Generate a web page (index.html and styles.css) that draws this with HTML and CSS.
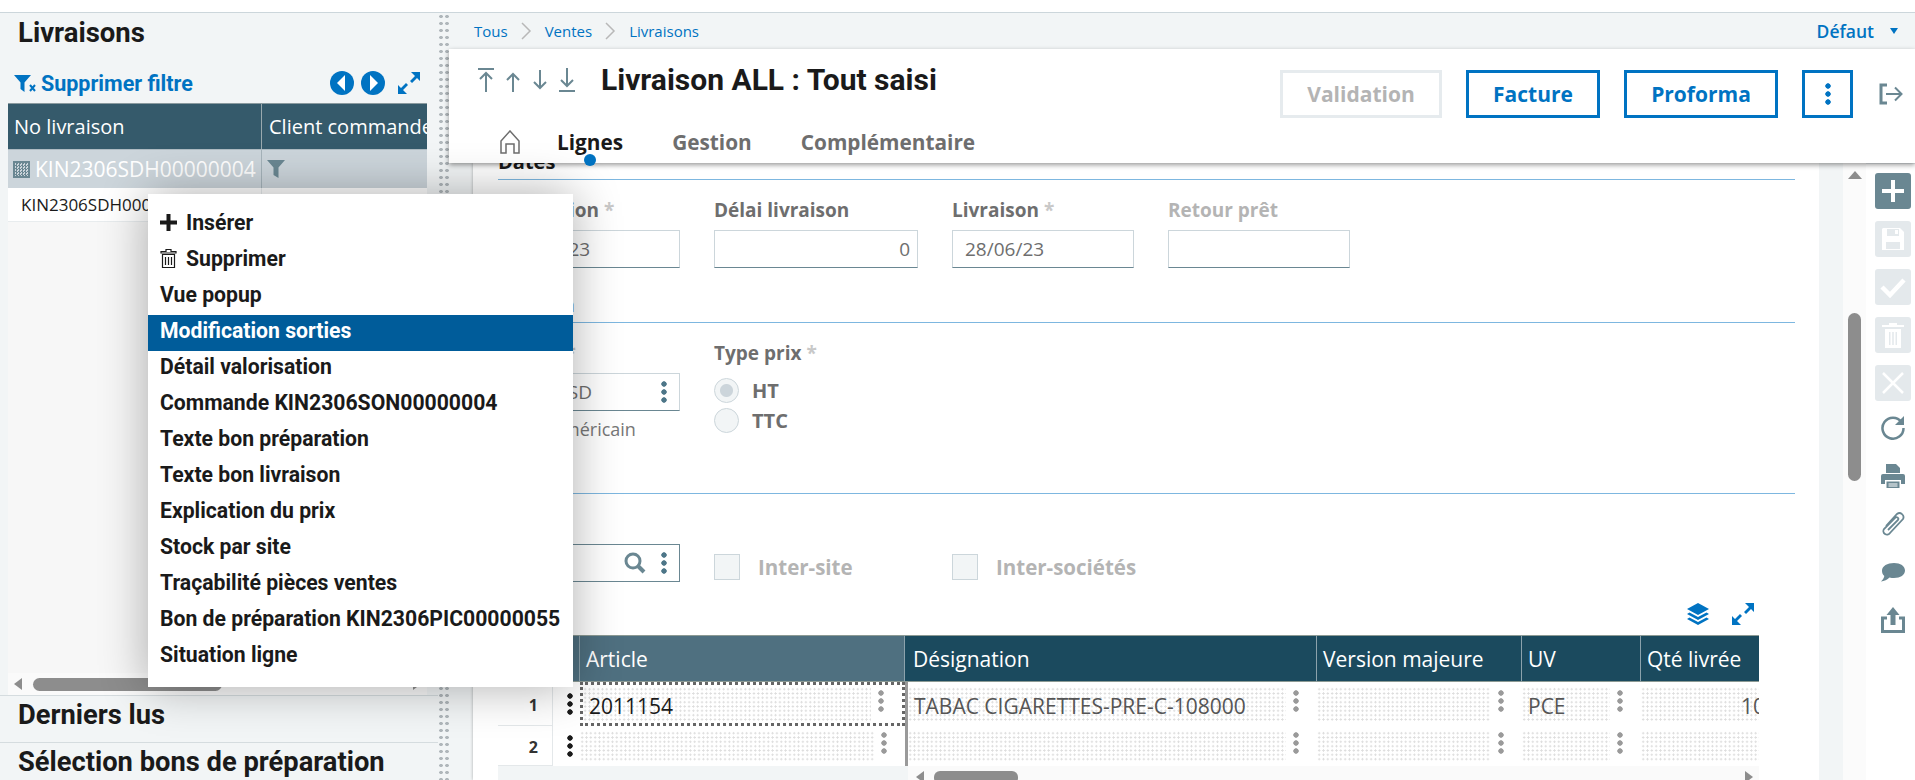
FILE: index.html
```html
<!DOCTYPE html>
<html lang="fr">
<head>
<meta charset="UTF-8">
<meta name="viewport" content="width=device-width, initial-scale=1.0">
<link rel="stylesheet" href="styles.css">
<title>Livraisons</title>
</head>

<body>
  <div class="top-strip"></div>

  <div class="app">
    <!-- left list panel -->
    <aside class="left-panel">
      <h2 class="panel-title">Livraisons</h2>
      <div class="panel-tools">
        <svg class="filter-x" width="23" height="18" viewBox="0 0 23 18"><path d="M0 1h17l-6.500 7.500V18L6.500 15V8.500z" fill="#0073c2"/><path d="M16 11l5 6M21 11l-5 6" stroke="#0073c2" stroke-width="2"/></svg>
        <span class="remove-filter">Supprimer filtre</span>
        <span class="panel-tools-right">
          <svg width="24" height="24" viewBox="0 0 24 24"><circle cx="12" cy="12" r="12" fill="#0073c2"/><path d="M15 4v16L7 12z" fill="#fff"/></svg>
          <svg class="next-btn" width="24" height="24" viewBox="0 0 24 24"><circle cx="12" cy="12" r="12" fill="#0073c2"/><path d="M9 4v16l8-8z" fill="#fff"/></svg>
          <svg class="expand-btn" width="22" height="22" viewBox="0 0 22 22"><path d="M13 0h9v9l-3-3-5 5-2-2 5-5zM9 22H0v-9l3 3 5-5 2 2-5 5z" fill="#0073c2"/></svg>
        </span>
      </div>

      <div class="list-table">
        <div class="list-head">
          <div class="list-col-a">No livraison</div>
          <div class="list-col-b">Client commande</div>
        </div>
        <div class="list-filter">
          <div class="list-col-a">
            <span class="filter-chip"></span>
            <span>KIN2306SDH00000004</span>
          </div>
          <div class="list-col-b">
            <svg width="18" height="20" viewBox="0 0 18 20"><path d="M0 1h18l-6.500 7.500V19L6.500 16V8.500z" fill="#6a8792"/></svg>
          </div>
        </div>
        <div class="list-row">
          <div class="list-col-a">KIN2306SDH00000004</div>
          <div class="list-col-b"></div>
        </div>
      </div>

      <div class="list-space"></div>

      <div class="list-scroll">
        <span class="arrow-left"></span>
        <span class="list-thumb"></span>
        <span class="arrow-right"></span>
      </div>

      <h2 class="accordion-item">Derniers lus</h2>
      <h2 class="accordion-item">Sélection bons de préparation</h2>
    </aside>

    <div class="splitter"></div>

    <!-- right side -->
    <div class="work">
      <div class="crumbs">
        <a>Tous</a>
        <svg width="11" height="18" viewBox="0 0 11 18"><path d="M1 1l8 8-8 8" fill="none" stroke="#b8b8b8" stroke-width="1.500"/></svg>
        <a>Ventes</a>
        <svg width="11" height="18" viewBox="0 0 11 18"><path d="M1 1l8 8-8 8" fill="none" stroke="#b8b8b8" stroke-width="1.500"/></svg>
        <a>Livraisons</a>
        <span class="crumbs-right">Défaut<span class="caret"></span></span>
      </div>

      <header class="doc-head">
        <div class="doc-head-top">
          <div class="nav-arrows">
            <svg width="16" height="24" viewBox="0 0 16 24"><path d="M0 1h16M8 24V5M2 11l6-6 6 6" fill="none" stroke="#6a8792" stroke-width="2"/></svg>
            <svg width="16" height="24" viewBox="0 0 16 24"><path d="M8 24V6M2 12l6-6 6 6" fill="none" stroke="#6a8792" stroke-width="2"/></svg>
            <svg width="16" height="24" viewBox="0 0 16 24"><path d="M8 2v18M2 14l6 6 6-6" fill="none" stroke="#6a8792" stroke-width="2"/></svg>
            <svg width="16" height="24" viewBox="0 0 16 24"><path d="M8 0v18M2 12l6 6 6-6M0 23h16" fill="none" stroke="#6a8792" stroke-width="2"/></svg>
          </div>
          <h1 class="doc-title">Livraison ALL : Tout saisi</h1>
          <div class="doc-actions">
            <button class="btn btn-off btn-validation">Validation</button>
            <button class="btn btn-facture">Facture</button>
            <button class="btn btn-proforma">Proforma</button>
            <button class="btn btn-more"><span class="kebab"></span></button>
            <svg class="logout" width="24" height="22" viewBox="0 0 24 22"><path d="M8 2H2v18h6" fill="none" stroke="#6a8792" stroke-width="3"/><path d="M7 11h15M16 4.500l6.500 6.500-6.500 6.500" fill="none" stroke="#6a8792" stroke-width="2"/></svg>
          </div>
        </div>
        <nav class="tabs">
          <svg class="tab-home" width="20" height="24" viewBox="0 0 20 24"><path d="M1 11L10 1l9 10v12h-5v-9H6v9H1z" fill="none" stroke="#6e6e6e" stroke-width="1.500"/></svg>
          <span class="tab tab-on">Lignes<i class="tab-dot"></i></span>
          <span class="tab">Gestion</span>
          <span class="tab">Complémentaire</span>
        </nav>
      </header>

      <div class="body-row">
        <div class="left-gutter"></div>
        <main class="form">
          <section class="sec-dates">
            <h3 class="sec-title">Dates</h3>
            <div class="fields">
              <div class="field w182">
                <label>Expédition <em>*</em></label>
                <div class="input">28/06/23</div>
              </div>
              <div class="field w204">
                <label>Délai livraison</label>
                <div class="input input-num">0</div>
              </div>
              <div class="field w182">
                <label>Livraison <em>*</em></label>
                <div class="input">28/06/23</div>
              </div>
              <div class="field w182">
                <label class="label-off">Retour prêt</label>
                <div class="input"></div>
              </div>
            </div>
          </section>

          <section class="sec-price">
            <h3 class="sec-title">Gestion</h3>
            <div class="fields">
              <div class="field w182">
                <label>Devise <em>*</em></label>
                <div class="input input-tools input-code">USD<span class="kebab"></span></div>
                <div class="input-sub">Dollar américain</div>
              </div>
              <div class="field w204">
                <label>Type prix <em>*</em></label>
                <div class="radio-line radio-first"><span class="radio radio-on"></span>HT</div>
                <div class="radio-line"><span class="radio"></span>TTC</div>
              </div>
            </div>
          </section>

          <section class="sec-site">
            <h3 class="sec-title"></h3>
            <div class="site-row">
              <div class="input input-tools input-dark w182">
                <svg class="search-ico" width="22" height="22" viewBox="0 0 22 22"><circle cx="9" cy="9" r="7" fill="none" stroke="#6a8792" stroke-width="3"/><path d="M14 14l6 6" stroke="#6a8792" stroke-width="4"/></svg>
                <span class="kebab"></span>
              </div>
              <div class="check check-a"><span class="check-box"></span>Inter-site</div>
              <div class="check"><span class="check-box"></span>Inter-sociétés</div>
            </div>
          </section>

          <div class="grid-tools">
            <svg width="24" height="22" viewBox="0 0 24 22"><path d="M12 0l11 6-11 6L1 6z" fill="#0073c2"/><path d="M3.500 9.500L1 11l11 6 11-6-2.500-1.500L12 14z" fill="#0073c2"/><path d="M3.500 14.500L1 16l11 6 11-6-2.500-1.500L12 19z" fill="#0073c2"/></svg>
            <svg width="22" height="22" viewBox="0 0 22 22"><path d="M13 0h9v9l-3-3-5 5-2-2 5-5zM9 22H0v-9l3 3 5-5 2 2-5 5z" fill="#0073c2"/></svg>
          </div>

          <div class="grid">
            <div class="gh gh-num"></div>
            <div class="gh gh-sel">Article</div>
            <div class="gh gh-sep">Désignation</div>
            <div class="gh">Version majeure</div>
            <div class="gh">UV</div>
            <div class="gh">Qté livrée</div>

            <div class="gnum"><b>1</b><span class="kebab"></span></div>
            <div class="gc gc-focus"><span class="gc-text">2011154</span><span class="kebab"></span></div>
            <div class="gc gc-sep"><span class="gc-text">TABAC CIGARETTES-PRE-C-108000</span><span class="kebab"></span></div>
            <div class="gc"><span class="gc-text"></span><span class="kebab"></span></div>
            <div class="gc"><span class="gc-text">PCE</span><span class="kebab"></span></div>
            <div class="gc gc-qty"><span class="gc-text">100</span></div>

            <div class="gnum"><b>2</b><span class="kebab"></span></div>
            <div class="gc"><span class="gc-text"></span><span class="kebab"></span></div>
            <div class="gc gc-sep"><span class="gc-text"></span><span class="kebab"></span></div>
            <div class="gc"><span class="gc-text"></span><span class="kebab"></span></div>
            <div class="gc"><span class="gc-text"></span><span class="kebab"></span></div>
            <div class="gc gc-qty"><span class="gc-text"></span></div>
          </div>

          <div class="grid-scroll">
            <div class="grid-scroll-fixed"></div>
            <div class="grid-scroll-track">
              <span class="arrow-left"></span>
              <span class="grid-thumb"></span>
              <span class="arrow-right"></span>
            </div>
          </div>
        </main>

        <div class="v-gutter"></div>
        <div class="v-scroll">
          <span class="arrow-up"></span>
          <span class="v-thumb"></span>
        </div>

        <div class="side-tools">
          <span class="st st-on"><svg width="24" height="24" viewBox="0 0 24 24"><path d="M10 1h4v9h9v4h-9v9h-4v-9H1v-4h9z" fill="#fff"/></svg></span>
          <span class="st"><svg width="24" height="24" viewBox="0 0 24 24"><path d="M2 1h17l4 4v18H1V2zM6 2v7h12V2zM14 3h3v4h-3zM5 15v7h14v-7z" fill="#fff" fill-rule="evenodd"/></svg></span>
          <span class="st"><svg width="26" height="22" viewBox="0 0 26 22"><path d="M2 11l8 8L24 4" fill="none" stroke="#fff" stroke-width="4.500"/></svg></span>
          <span class="st"><svg width="22" height="26" viewBox="0 0 22 26"><path d="M7 1h8v2h7v2H0V3h7zM3 7h16v19H3zM7 10v13h1.500V10zM10.200 10v13h1.600V10zM13.500 10v13H15V10z" fill="#fff" fill-rule="evenodd"/></svg></span>
          <span class="st"><svg width="22" height="22" viewBox="0 0 22 22"><path d="M1 1l20 20M21 1L1 21" stroke="#fff" stroke-width="2.500"/></svg></span>
          <span class="st-plain st-first"><svg width="26" height="26" viewBox="0 0 26 26"><path d="M21.500 7A10.500 10.500 0 1 0 23.500 13" fill="none" stroke="#6a8792" stroke-width="2.500"/><path d="M24 1v9h-9z" fill="#6a8792"/></svg></span>
          <span class="st-plain"><svg width="26" height="26" viewBox="0 0 26 26"><path d="M6 1h10l4 4v5H6zM3 11h20a2 2 0 0 1 2 2v8h-4v-4H5v4H1v-8a2 2 0 0 1 2-2zM6.500 18.500h13V25h-13z" fill="#6a8792"/><path d="M8.500 21h9M8.500 23h9" stroke="#fff"/></svg></span>
          <span class="st-plain"><svg width="26" height="26" viewBox="0 0 26 26"><path d="M6 15L17 3a4 4 0 0 1 6 5L10 22a3 3 0 0 1-6-4L15 7a1.800 1.800 0 0 1 3 2L8 19" fill="none" stroke="#6a8792" stroke-width="1.800"/></svg></span>
          <span class="st-plain"><svg width="26" height="22" viewBox="0 0 26 22"><path d="M14 2c6.500 0 11 3 11 7.500S20.500 17 14 17c-1.500 0-3-.2-4.500-.6C7.500 18.500 4 20 1 20.500c1.600-1.500 3-3.300 3.300-5.500C2.500 13.500 2 11.500 2 9.500 2 5 7.500 2 14 2z" fill="#6a8792"/></svg></span>
          <span class="st-plain"><svg width="24" height="26" viewBox="0 0 24 26"><path d="M12 0l6.500 8H14.500v10h-5V8H5.500z" fill="#6a8792"/><path d="M6 11H1.500v13.500h21V11H18" fill="none" stroke="#6a8792" stroke-width="3"/></svg></span>
        </div>
      </div>
    </div>
  </div>

  <!-- context menu -->
  <ul class="menu">
    <li><svg width="17" height="17" viewBox="0 0 17 17"><path d="M6.500 0h4v6.500H17v4h-6.500V17h-4v-6.500H0v-4h6.500z" fill="#1a1a1a"/></svg>Insérer</li>
    <li><svg width="17" height="19" viewBox="0 0 16 19"><path d="M5.500.5h5v2h5v1.500H.5V2.500h5zM2 5.500h12V18.500H2zM5 8v8M8 8v8M11 8v8" fill="none" stroke="#1a1a1a" stroke-width="1.200"/></svg>Supprimer</li>
    <li>Vue popup</li>
    <li class="menu-on">Modification sorties</li>
    <li>Détail valorisation</li>
    <li>Commande KIN2306SON00000004</li>
    <li>Texte bon préparation</li>
    <li>Texte bon livraison</li>
    <li>Explication du prix</li>
    <li>Stock par site</li>
    <li>Traçabilité pièces ventes</li>
    <li>Bon de préparation KIN2306PIC00000055</li>
    <li>Situation ligne</li>
  </ul>
</body>
</html>
```

FILE: styles.css
```css
* {
  box-sizing: border-box;
}
html, body {
  margin: 0;
  height: 100%;
  overflow: hidden;
}
body {
  width: 1915px;
  height: 780px;
  position: relative;
  background-color: #fff;
  color: #1a1a1a;
  font-family: "Open Sans", "Liberation Sans", sans-serif;
  display: flex;
  flex-direction: column;
}
h1, h2, h3 {
  margin: 0;
}
svg {
  display: block;
  flex: none;
}

.top-strip {
  height: 13px;
  flex: none;
  border-bottom: 1px solid #ccd6db;
}
.app {
  flex: 1;
  display: flex;
  min-height: 0;
}

/* left panel */
.left-panel {
  width: 438px;
  flex: none;
  display: flex;
  flex-direction: column;
  background-color: #f2f5f6;
  overflow: hidden;
}
.panel-title {
  height: 38px;
  flex: none;
  padding: 1px 0 0 18px;
  font: 700 27.500px/38px Roboto, sans-serif;
}
.panel-tools {
  height: 52px;
  flex: none;
  display: flex;
  align-items: center;
  padding: 12px 18px 0 14px;
  color: #0073c2;
}
.remove-filter {
  margin-left: 4px;
  font: 700 21.500px Roboto, sans-serif;
}
.panel-tools-right {
  margin-left: auto;
  display: flex;
  align-items: center;
}
.next-btn {
  margin-left: 7px;
}
.expand-btn {
  margin-left: 13px;
}
.list-table {
  margin: 0 11px 0 8px;
  flex: none;
}
.list-head, .list-filter, .list-row {
  display: flex;
  overflow: hidden;
  white-space: nowrap;
}
.list-col-a {
  width: 254px;
  flex: none;
  display: flex;
  align-items: center;
}
.list-col-b {
  flex: 1;
  display: flex;
  align-items: center;
}
.list-head {
  height: 46px;
  background-color: #355a6b;
  color: #fff;
  font-size: 20px;
  border-top: 1px solid #8a9a9f;
}
.list-head .list-col-a {
  padding-left: 6px;
  border-right: 1px solid #9aa9ae;
}
.list-head .list-col-b {
  padding-left: 7px;
}
.list-filter {
  height: 39px;
  background-color: #ccd5db;
  color: #fff;
  font-size: 21px;
  border-top: 1px solid #aebbc2;
}
.list-filter .list-col-a {
  padding-left: 5px;
  gap: 5px;
  border-right: 1px solid #a5b3ba;
}
.list-filter .list-col-b {
  padding-left: 5px;
}
.filter-chip {
  width: 17px;
  height: 17px;
  border: 2px solid #6a8792;
  background: repeating-conic-gradient(#6a8792 0 25%, #ccd5db 0 50%) 0 0 / 3px 3px;
}
.list-row {
  height: 34px;
  background-color: #fff;
  font-size: 17px;
  border-bottom: 1px solid #e8ecee;
}
.list-row .list-col-a {
  padding-left: 13px;
  border-right: 1px solid #e8ecee;
}
.list-space {
  flex: 1;
  margin: 0 11px 0 8px;
  background-color: #f7f7f7;
}
.list-scroll {
  height: 22px;
  flex: none;
  margin: 0 11px 0 8px;
  background-color: #fafafa;
  display: flex;
  align-items: center;
  padding: 0 6px;
}
.list-thumb {
  width: 189px;
  height: 13px;
  margin-left: 11px;
  border-radius: 7px;
  background-color: #8d8d8d;
}
.list-scroll .arrow-right {
  margin-left: auto;
}
.accordion-item {
  height: 47px;
  flex: none;
  padding: 1px 0 0 18px;
  border-top: 1px solid #d5dcdf;
  font: 700 27.300px/36px Roboto, sans-serif;
}
.accordion-item + .accordion-item {
  height: 38px;
}

.arrow-left, .arrow-right {
  width: 0;
  height: 0;
  border-top: 6px solid transparent;
  border-bottom: 6px solid transparent;
}
.arrow-left {
  border-right: 8px solid #8d8d8d;
}
.arrow-right {
  border-left: 8px solid #8d8d8d;
}

.splitter {
  width: 11px;
  flex: none;
  background-color: #f2f5f6;
  background-image: radial-gradient(circle, #b0b7bb 1.500px, transparent 2px);
  background-size: 6px 7px;
}

/* right side */
.work {
  flex: 1;
  min-width: 0;
  display: flex;
  flex-direction: column;
}
.crumbs {
  height: 36px;
  flex: none;
  display: flex;
  align-items: center;
  padding-left: 25px;
  background-color: #f2f5f6;
  font-size: 15px;
  color: #0073c2;
}
.crumbs svg {
  margin: 0 13px 0 13px;
}
.crumbs-right {
  margin-left: auto;
  display: flex;
  align-items: center;
  padding-right: 17px;
  font-weight: 600;
  font-size: 17.500px;
}
.caret {
  margin-left: 16px;
  width: 0;
  height: 0;
  border-left: 4px solid transparent;
  border-right: 4px solid transparent;
  border-top: 6px solid #0073c2;
}
.doc-head {
  height: 114px;
  flex: none;
  position: relative;
  z-index: 2;
  background-color: #fff;
  box-shadow: 0 2px 5px rgba(0, 0, 0, .4);
}
.doc-head-top {
  height: 69px;
  display: flex;
  align-items: flex-start;
  padding-left: 29px;
}
.nav-arrows {
  display: flex;
  gap: 11px;
  margin-top: 19px;
}
.doc-title {
  margin: 10px 0 0 26px;
  font: 700 30px/42px Roboto, sans-serif;
}
.doc-actions {
  margin-left: auto;
  margin-top: 21px;
  display: flex;
  align-items: center;
  gap: 24px;
  padding-right: 12px;
}
.btn {
  height: 48px;
  padding: 0;
  background-color: #fff;
  border: 3px solid #0073c2;
  color: #0073c2;
  font: 700 21px "Open Sans", sans-serif;
  display: flex;
  align-items: center;
  justify-content: center;
}
.btn-off {
  border-color: #e6ebee;
  color: #b4b4b4;
}
.btn-validation {
  width: 162px;
}
.btn-facture {
  width: 134px;
}
.btn-proforma {
  width: 154px;
}
.btn-more {
  width: 51px;
}
.logout {
  margin-left: 2px;
}
.kebab {
  display: block;
  flex: none;
  width: 6px;
  height: 24px;
  background: radial-gradient(circle, currentColor 2.400px, transparent 3px) 0 0 / 6px 8px repeat-y;
}
.tabs {
  position: relative;
  display: flex;
  align-items: center;
  height: 47px;
  padding: 1px 0 0 51px;
  font-size: 20.800px;
  font-weight: 700;
  color: #6e6e6e;
}
.tab-home {
  margin-right: 37px;
}
.tab {
  position: relative;
  margin-right: 49px;
}
.tab-on {
  color: #1a1a1a;
}
.tab-dot {
  position: absolute;
  left: 27px;
  bottom: -10px;
  width: 12px;
  height: 12px;
  border-radius: 50%;
  background-color: #0073c2;
}

.body-row {
  flex: 1;
  min-height: 0;
  display: flex;
  background-color: #f2f5f6;
}
.left-gutter {
  width: 24px;
  flex: none;
}
.form {
  width: 1346px;
  flex: none;
  padding: 0 24px 0 25px;
  background-color: #fff;
  box-shadow: 0 0 3px rgba(0, 0, 0, .3);
  overflow: hidden;
}
.sec-title {
  height: 33px;
  padding-top: 4px;
  font: 700 20px/22px "Open Sans", sans-serif;
  color: #1a1a1a;
  border-bottom: 1px solid #7db7e0;
}
.sec-dates {
  margin-top: -16px;
  height: 143px;
}
.sec-price {
  height: 171px;
}
.fields {
  display: flex;
  gap: 34px;
  padding-top: 20px;
}
.w182 {
  width: 182px;
}
.w204 {
  width: 204px;
}
.field label {
  display: block;
  height: 20px;
  margin-bottom: 10px;
  font-size: 19px;
  line-height: 20px;
  font-weight: 700;
  color: #6e6e6e;
  white-space: nowrap;
}
.field label em {
  font-style: normal;
  color: #c8c8c8;
}
.field label.label-off {
  color: #b4b4b4;
}
.input {
  height: 38px;
  padding: 0 12px;
  display: flex;
  align-items: center;
  background-color: #fff;
  border: 1px solid #ccd6db;
  border-bottom-color: #6a8792;
  font-size: 19px;
  color: #6e6e6e;
}
.input-num {
  justify-content: flex-end;
  padding-right: 7px;
}
.input-tools {
  justify-content: space-between;
  padding-right: 12px;
  color: #6e6e6e;
}
.input-tools .kebab {
  color: #4d7688;
}
.input-code {
  padding-left: 55px;
}
.input-sub {
  margin-top: 6px;
  font-size: 18px;
  color: #777;
  white-space: nowrap;
}
.radio-line {
  display: flex;
  align-items: center;
  gap: 13px;
  height: 25px;
  margin-bottom: 5px;
  font-size: 20px;
  font-weight: 700;
  color: #6e6e6e;
}
.radio-first {
  margin-top: 15px;
}
.radio {
  width: 25px;
  height: 25px;
  border-radius: 50%;
  border: 1px solid #ccd6db;
  background-color: #f2f5f6;
}
.radio-on {
  background: radial-gradient(circle, #ccd5db 6px, #f2f5f6 7px);
}
.site-row {
  display: flex;
  align-items: flex-start;
  padding-top: 50px;
}
.input-dark {
  border-color: #6a8792;
  justify-content: flex-end;
  gap: 15px;
}
.check {
  margin: 9px 0 0 34px;
  display: flex;
  align-items: center;
  gap: 18px;
  font-size: 20.500px;
  font-weight: 700;
  color: #b4b4b4;
}
.check-a {
  width: 204px;
}
.check-box {
  width: 26px;
  height: 26px;
  background-color: #f2f5f6;
  border: 1px solid #ccd6db;
}
.grid-tools {
  margin-top: 21px;
  width: 1261px;
  height: 22px;
  display: flex;
  justify-content: flex-end;
  gap: 22px;
  padding-right: 5px;
}
.grid {
  margin-top: 10px;
  width: 1261px;
  display: grid;
  grid-template-columns: 82px 325px 412px 205px 119px 160px;
  grid-template-rows: 47px 44px 40px;
  overflow: hidden;
}
.gh {
  padding-left: 6px;
  display: flex;
  align-items: center;
  background-color: #1b4a5e;
  color: #fff;
  font-size: 21px;
  border-top: 1px solid #8c9a94;
  border-bottom: 1px solid #8c9a94;
  border-right: 1px solid #8ca2ac;
  white-space: nowrap;
}
.gh-sel, .gh-num {
  background-color: #4f7080;
}
.gh-sep {
  padding-left: 8px;
}
.gnum {
  display: flex;
  align-items: center;
  gap: 14px;
  color: #1a1a1a;
}
.gnum b {
  width: 55px;
  height: 100%;
  padding: 2px 14px 0 0;
  display: flex;
  align-items: center;
  justify-content: flex-end;
  border-right: 1px solid #e4e8ea;
  border-bottom: 1px solid #e4e8ea;
  font-size: 16px;
  color: #333;
}
.gc {
  display: flex;
  align-items: center;
  padding: 5px 0;
  gap: 7px;
  color: #9a9a9a;
}
.gc .kebab {
  margin-right: 18px;
  margin-top: -6px;
}
.gc-text {
  flex: 1;
  min-width: 0;
  height: 100%;
  padding: 4px 0 0 6px;
  display: flex;
  align-items: center;
  font-size: 21px;
  color: #555;
  background-image: radial-gradient(circle, #dedede .9px, transparent 1.100px);
  background-size: 4.330px 4.330px;
  white-space: nowrap;
}
.gc-sep {
  border-left: 3px solid #9a9a9a;
}
.gc-focus {
  border: 3px dotted #666;
  padding: 2px 0;
}
.gc-focus .gc-text {
  color: #1a1a1a;
}
.gc-qty .gc-text {
  justify-content: flex-end;
  padding-right: 24px;
}
.grid-scroll {
  width: 1261px;
  height: 16px;
  display: flex;
}
.grid-scroll-fixed {
  width: 410px;
  background-color: #f2f5f6;
}
.grid-scroll-track {
  flex: 1;
  display: flex;
  align-items: flex-start;
  padding: 5px 6px 0 8px;
  background-color: #fafafa;
}
.grid-thumb {
  width: 84px;
  height: 13px;
  margin-left: 10px;
  border-radius: 6px;
  background-color: #8d8d8d;
}
.grid-scroll-track .arrow-right {
  margin-left: auto;
}

.v-gutter {
  width: 24px;
  flex: none;
  background-color: #f2f5f6;
}
.v-scroll {
  width: 23px;
  flex: none;
  position: relative;
  background-color: #fbfbfb;
}
.arrow-up {
  position: absolute;
  left: 5px;
  top: 8px;
  width: 0;
  height: 0;
  border-left: 7px solid transparent;
  border-right: 7px solid transparent;
  border-bottom: 8px solid #8d8d8d;
}
.v-thumb {
  position: absolute;
  left: 5px;
  top: 150px;
  width: 13px;
  height: 168px;
  border-radius: 7px;
  background-color: #8d8d8d;
}
.side-tools {
  flex: 1;
  display: flex;
  flex-direction: column;
  align-items: center;
  gap: 12px;
  padding: 9px 4px 0 9px;
  background-color: #fff;
  border-top: 1px solid #e8ecee;
}
.st, .st-plain {
  width: 36px;
  height: 36px;
  flex: none;
  display: flex;
  align-items: center;
  justify-content: center;
}
.st {
  background-color: #e4e9ec;
  border-radius: 3px;
}
.st-on {
  background-color: #6a8792;
}
.st-first {
  margin-top: -3px;
}

/* context menu */
.menu {
  position: absolute;
  left: 148px;
  top: 194px;
  width: 425px;
  height: 493px;
  margin: 0;
  padding: 13px 0 0;
  list-style: none;
  background-color: #fff;
  box-shadow: 0 0 45px rgba(0, 0, 0, .32);
  z-index: 5;
  font: 700 21.200px Roboto, sans-serif;
}
.menu li {
  height: 36px;
  padding: 0 0 5px 12px;
  display: flex;
  align-items: center;
  gap: 9px;
  white-space: nowrap;
}
.menu .menu-on {
  background-color: #005c9a;
  color: #fff;
}
```
